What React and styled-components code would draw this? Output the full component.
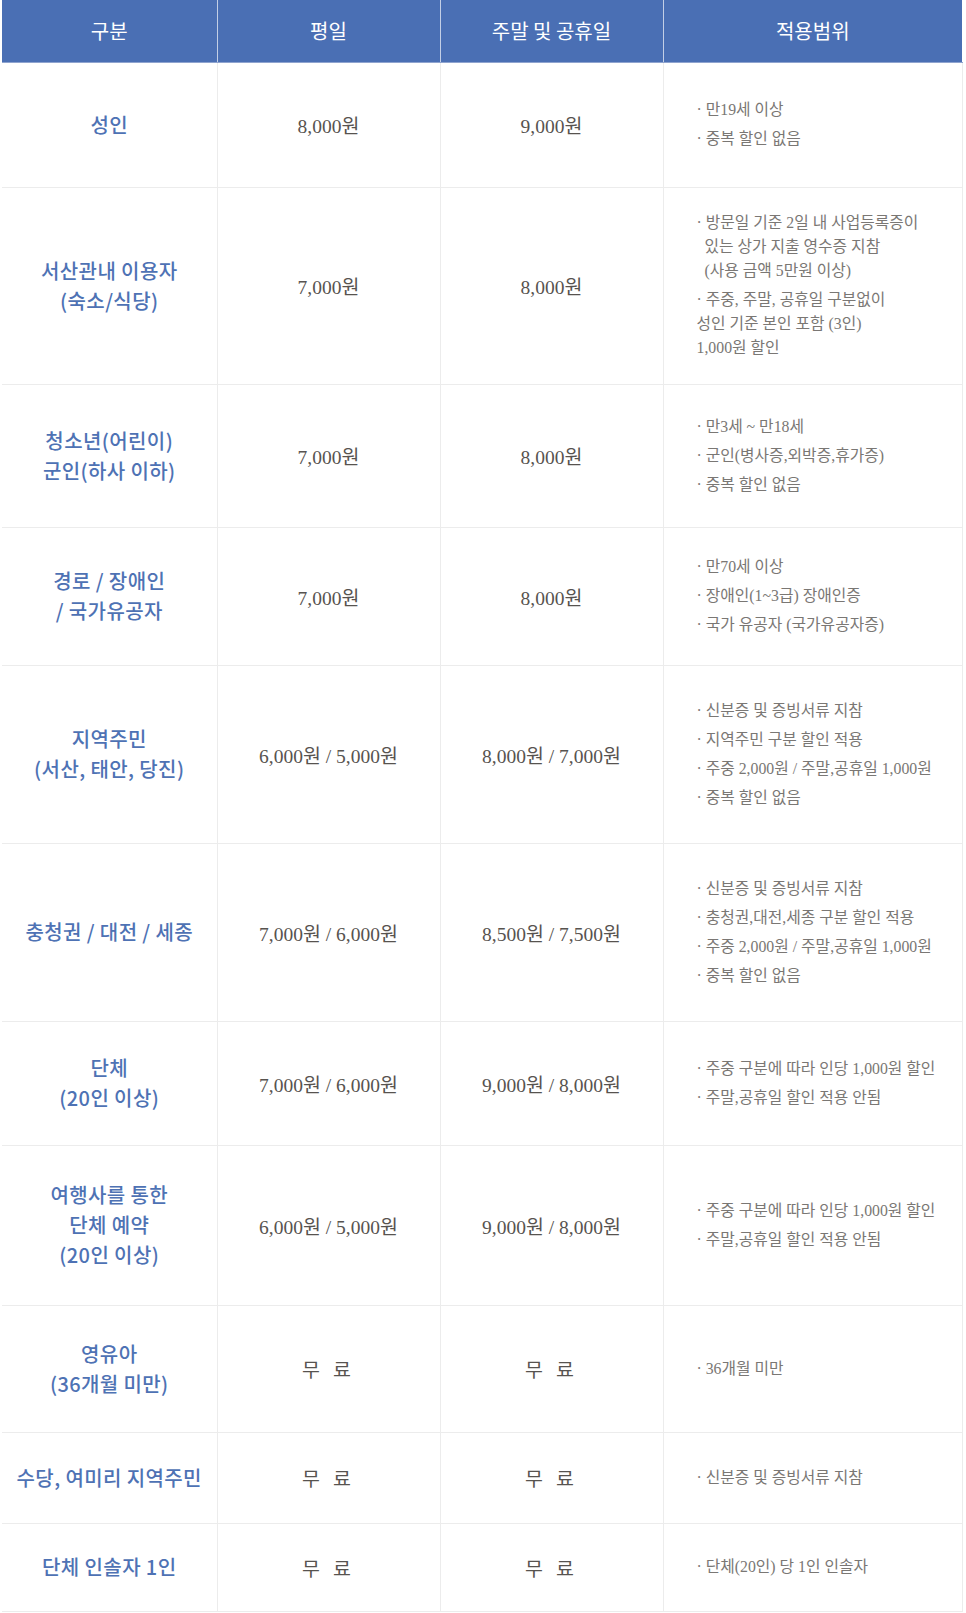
import React from 'react';
import styled, { createGlobalStyle } from 'styled-components';

const GlobalStyle = createGlobalStyle`
  body {
    margin: 0;
    background: #fff;
    font-family: "Noto Sans CJK KR", sans-serif;
  }
`;

const Page = styled.div`
  width: 966px;
  height: 1613px;
  padding-left: 2px;
  box-sizing: border-box;
  overflow: hidden;
`;

const Table = styled.table`
  width: 960px;
  border-collapse: collapse;
  table-layout: fixed;
`;

const HeadRow = styled.tr`
  height: 62px;
  background: #4a6fb4;
`;

const HeadCell = styled.th`
  padding: 0;
  color: #fff;
  font-family: "Noto Sans CJK KR", sans-serif;
  font-size: 20px;
  font-weight: 400;
  text-align: center;
  border-left: 1px solid #c3cfe6;
  border-bottom: 1px solid #8fa4cf;
  &:first-child {
    border-left: none;
  }
`;

const Row = styled.tr`
  height: ${(p) => p.$h}px;
`;

const Cell = styled.td`
  padding: 0;
  border: 1px solid #ececec;
  vertical-align: middle;
  &:first-child {
    border-left: none;
  }
`;

const NameCell = styled(Cell)`
  text-align: center;
  color: #4e72b4;
  font-family: "Noto Sans CJK KR", sans-serif;
  font-size: 20px;
  font-weight: 500;
  letter-spacing: 0.4px;
  line-height: 30px;
`;

const PriceCell = styled(Cell)`
  text-align: center;
  color: #57534f;
  font-family: "Liberation Serif", "Noto Sans CJK KR", serif;
  font-size: 19.5px;
  letter-spacing: ${(p) => (p.$free ? '4px' : '0')};
  white-space: nowrap;
`;

const ScopeCell = styled(Cell)`
  padding-left: 33px;
  color: #7a7774;
  font-family: "Liberation Serif", "Noto Sans CJK KR", serif;
  font-size: 15.8px;
  line-height: 24px;
  white-space: nowrap;
`;

const Item = styled.div`
  & + & {
    margin-top: 5px;
  }
`;

const Line = styled.div`
  padding-left: ${(p) => (p.$indent ? '8px' : '0')};
`;

const rows = [
  { h: 125, name: ['성인'], wd: '8,000원', we: '9,000원', scope: ['만19세 이상', '중복 할인 없음'] },
  {
    h: 197,
    name: ['서산관내 이용자', '(숙소/식당)'],
    wd: '7,000원',
    we: '8,000원',
    scope: [
      { t: '방문일 기준 2일 내 사업등록증이\n있는 상가 지출 영수증 지참\n(사용 금액 5만원 이상)', hang: true },
      '주중, 주말, 공휴일 구분없이\n성인 기준 본인 포함 (3인)\n1,000원 할인',
    ],
  },
  {
    h: 143,
    name: ['청소년(어린이)', '군인(하사 이하)'],
    wd: '7,000원',
    we: '8,000원',
    scope: ['만3세 ~ 만18세', '군인(병사증,외박증,휴가증)', '중복 할인 없음'],
  },
  {
    h: 138,
    name: ['경로 / 장애인', '/ 국가유공자'],
    wd: '7,000원',
    we: '8,000원',
    scope: ['만70세 이상', '장애인(1~3급) 장애인증', '국가 유공자 (국가유공자증)'],
  },
  {
    h: 178,
    name: ['지역주민', '(서산, 태안, 당진)'],
    wd: '6,000원 / 5,000원',
    we: '8,000원 / 7,000원',
    scope: ['신분증 및 증빙서류 지참', '지역주민 구분 할인 적용', '주중 2,000원 / 주말,공휴일 1,000원', '중복 할인 없음'],
  },
  {
    h: 178,
    name: ['충청권 / 대전 / 세종'],
    wd: '7,000원 / 6,000원',
    we: '8,500원 / 7,500원',
    scope: ['신분증 및 증빙서류 지참', '충청권,대전,세종 구분 할인 적용', '주중 2,000원 / 주말,공휴일 1,000원', '중복 할인 없음'],
  },
  {
    h: 124,
    name: ['단체', '(20인 이상)'],
    wd: '7,000원 / 6,000원',
    we: '9,000원 / 8,000원',
    scope: ['주중 구분에 따라 인당 1,000원 할인', '주말,공휴일 할인 적용 안됨'],
  },
  {
    h: 160,
    name: ['여행사를 통한', '단체 예약', '(20인 이상)'],
    wd: '6,000원 / 5,000원',
    we: '9,000원 / 8,000원',
    scope: ['주중 구분에 따라 인당 1,000원 할인', '주말,공휴일 할인 적용 안됨'],
  },
  { h: 127, name: ['영유아', '(36개월 미만)'], wd: '무 료', we: '무 료', free: true, scope: ['36개월 미만'] },
  { h: 91, name: ['수당, 여미리 지역주민'], wd: '무 료', we: '무 료', free: true, scope: ['신분증 및 증빙서류 지참'] },
  { h: 88, name: ['단체 인솔자 1인'], wd: '무 료', we: '무 료', free: true, scope: ['단체(20인) 당 1인 인솔자'] },
];

function Scope({ items }) {
  return (
    <ScopeCell>
      {items.map((it, i) => {
        const item = typeof it === 'string' ? { t: it } : it;
        const lines = item.t.split('\n');
        return (
          <Item key={i}>
            {lines.map((l, j) => (
              <Line key={j} $indent={item.hang && j > 0}>
                {(j === 0 ? '· ' : '') + l}
              </Line>
            ))}
          </Item>
        );
      })}
    </ScopeCell>
  );
}

export default function App() {
  return (
    <Page>
      <GlobalStyle />
      <Table>
        <colgroup>
          <col style={{ width: 215 }} />
          <col style={{ width: 223 }} />
          <col style={{ width: 223 }} />
          <col style={{ width: 299 }} />
        </colgroup>
        <thead>
          <HeadRow>
            <HeadCell>구분</HeadCell>
            <HeadCell>평일</HeadCell>
            <HeadCell>주말 및 공휴일</HeadCell>
            <HeadCell>적용범위</HeadCell>
          </HeadRow>
        </thead>
        <tbody>
          {rows.map((r, i) => (
            <Row key={i} $h={r.h}>
              <NameCell>
                {r.name.map((n, j) => (
                  <div key={j}>{n}</div>
                ))}
              </NameCell>
              <PriceCell $free={r.free}>{r.wd}</PriceCell>
              <PriceCell $free={r.free}>{r.we}</PriceCell>
              <Scope items={r.scope} />
            </Row>
          ))}
        </tbody>
      </Table>
    </Page>
  );
}
